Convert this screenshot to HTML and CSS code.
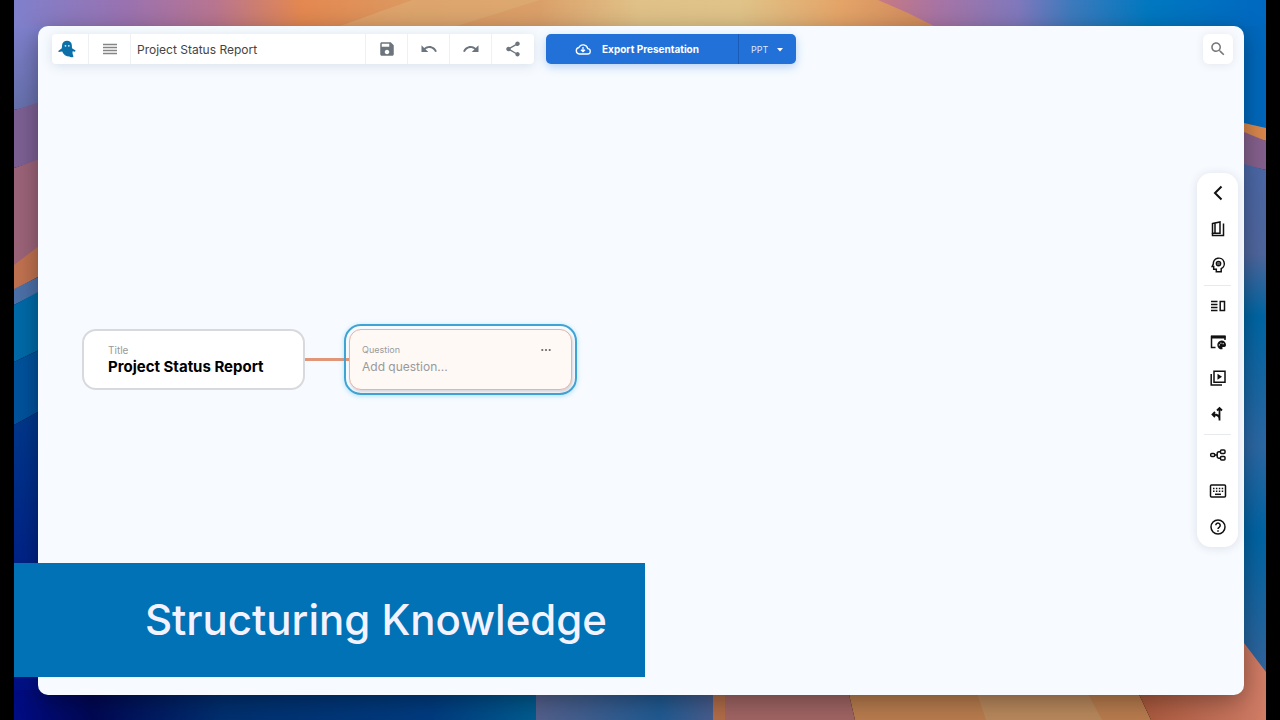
FILE: index.html
```html
<!DOCTYPE html>
<html lang="en">
<head>
    <meta charset="UTF-8">
    <meta name="viewport" content="width=device-width, initial-scale=1.0">
    <title>Project Status Report</title>
    <link rel="stylesheet" href="styles.css">
</head>
<body>
    <div class="desktop">
        <!-- Wallpaper -->
        <svg class="wallpaper" viewBox="14 0 1252 720" preserveAspectRatio="none" aria-hidden="true">
            <defs>
                <linearGradient id="top" gradientUnits="userSpaceOnUse" x1="14" y1="0" x2="1266" y2="0">
                    <stop offset="0" stop-color="#7f80cc"/>
                    <stop offset="0.09" stop-color="#9a72b0"/>
                    <stop offset="0.16" stop-color="#b87590"/>
                    <stop offset="0.23" stop-color="#e48850"/>
                    <stop offset="0.32" stop-color="#db9a62"/>
                    <stop offset="0.42" stop-color="#dba06a"/>
                    <stop offset="0.5" stop-color="#e0c288"/>
                    <stop offset="0.58" stop-color="#dfc388"/>
                    <stop offset="0.66" stop-color="#e4a468"/>
                    <stop offset="0.73" stop-color="#d08a5c"/>
                </linearGradient>
                <linearGradient id="topRight" gradientUnits="userSpaceOnUse" x1="878" y1="0" x2="1266" y2="0">
                    <stop offset="0" stop-color="#c87a80"/>
                    <stop offset="0.15" stop-color="#a874a4"/>
                    <stop offset="0.36" stop-color="#8078bc"/>
                    <stop offset="0.5" stop-color="#3c7abc"/>
                    <stop offset="0.7" stop-color="#0078c0"/>
                    <stop offset="1" stop-color="#0068c0"/>
                </linearGradient>
                <linearGradient id="bottom" gradientUnits="userSpaceOnUse" x1="14" y1="0" x2="536" y2="0">
                    <stop offset="0" stop-color="#000c84"/>
                    <stop offset="0.15" stop-color="#000854"/>
                    <stop offset="0.4" stop-color="#003070"/>
                    <stop offset="0.8" stop-color="#003c80"/>
                    <stop offset="1" stop-color="#005c90"/>
                </linearGradient>
                <linearGradient id="bottomMid" gradientUnits="userSpaceOnUse" x1="536" y1="0" x2="713" y2="0">
                    <stop offset="0" stop-color="#54608c"/>
                    <stop offset="0.7" stop-color="#205a92"/>
                    <stop offset="1" stop-color="#485c8c"/>
                </linearGradient>
                <linearGradient id="salmon" gradientUnits="userSpaceOnUse" x1="1139" y1="0" x2="1266" y2="0">
                    <stop offset="0" stop-color="#a8583c"/>
                    <stop offset="1" stop-color="#d07c66"/>
                </linearGradient>
                <linearGradient id="lavender" x1="0" y1="0" x2="0" y2="1">
                    <stop offset="0" stop-color="#7f80cc"/>
                    <stop offset="1" stop-color="#6670ac"/>
                </linearGradient>
                <linearGradient id="navy" x1="0" y1="0" x2="0" y2="1">
                    <stop offset="0" stop-color="#003a8c"/>
                    <stop offset="1" stop-color="#000c84"/>
                </linearGradient>
                <linearGradient id="east" x1="0" y1="0" x2="0" y2="1">
                    <stop offset="0" stop-color="#4a68a8"/>
                    <stop offset="0.18" stop-color="#50669e"/>
                    <stop offset="0.3" stop-color="#0066a4"/>
                    <stop offset="0.55" stop-color="#2c68a4"/>
                    <stop offset="0.72" stop-color="#0064a4"/>
                    <stop offset="1" stop-color="#34649c"/>
                </linearGradient>
            </defs>

            <rect x="14" y="0" width="1252" height="60" fill="url(#top)"/>
            <path d="M340 26L412 0H540L457 26z" fill="#e0b078" opacity="0.5"/>
            <path d="M878 0L908 13L934 26V60H1266V0z" fill="url(#topRight)"/>

            <path d="M14 26H60V100L14 110z" fill="url(#lavender)"/>
            <path d="M14 110L60 96V154L14 168z" fill="#7c6094"/>
            <path d="M14 168L60 152V240L14 268z" fill="#9c6478"/>
            <path d="M14 265L60 230V265L14 290z" fill="#c07250"/>
            <path d="M14 289L60 266V282L14 305z" fill="#4c70a8"/>
            <path d="M14 305L60 280V340L14 362z" fill="#006aa8"/>
            <path d="M14 362L60 340V400L14 425z" fill="#00529c"/>
            <path d="M14 425L60 400V720H14z" fill="url(#navy)"/>

            <path d="M1220 26H1266V130H1220z" fill="#0068bc"/>
            <path d="M1220 120L1244 123L1266 128V141L1220 128z" fill="#d8864c"/>
            <path d="M1220 126L1244 132L1266 141V170L1220 160z" fill="#84608c"/>
            <path d="M1220 160L1244 164L1266 170V680H1220z" fill="url(#east)"/>

            <rect x="14" y="690" width="522" height="30" fill="url(#bottom)"/>
            <rect x="536" y="690" width="177" height="30" fill="url(#bottomMid)"/>
            <path d="M713 690H848L855 720H713z" fill="#a06464"/>
            <rect x="713" y="690" width="12" height="30" fill="#b06c48"/>
            <path d="M848 690H1137L1151 720H855z" fill="#b87c4e"/>
            <path d="M976 690H1086L1102 720H986z" fill="#b8885c"/>
            <path d="M1220 622L1244 643L1266 672V720H1151L1137 690H1220z" fill="url(#salmon)"/>
        </svg>

        <main class="window">
            <header class="topbar">
                <div class="toolbar">
                    <button class="tool tool-logo" aria-label="Home">
                        <svg width="18" height="18" viewBox="0 0 18 18">
                            <path d="M9 .8c2.900 0 4.700 1.700 4.800 4.300l.2 3.100 3.600 2.400-.6 1.100-2.400-.4c0 1.400-.2 2.300.2 3.200.4 1 .6 1.500.6 2.300-1.300.7-2.900.7-4.100-.2C8.300 16.400 5.200 14.600 4.200 11.500L.6 12l-.3-1 3.500-2.800.3-3.200C4.300 2.400 6.200.8 9 .8z" fill="#0b6fa8"/>
                            <circle cx="7.500" cy="5.800" r=".9" fill="#d4f0ff"/>
                            <circle cx="10.800" cy="5.800" r=".9" fill="#d4f0ff"/>
                        </svg>
                    </button>
                    <button class="tool" aria-label="Menu">
                        <svg width="14" height="12" viewBox="0 0 14 12" stroke="#858585" stroke-width="1.300">
                            <path d="M0 1.500h14M0 4.500h14M0 7.500h14M0 10.500h14"/>
                        </svg>
                    </button>
                    <input class="doc-name" type="text" value="Project Status Report" aria-label="Document name">
                    <button class="tool" aria-label="Save">
                        <svg class="icon" viewBox="0 0 24 24"><path d="M17 3H5c-1.110 0-2 .9-2 2v14c0 1.100.89 2 2 2h14c1.100 0 2-.9 2-2V7l-4-4zm-5 16c-1.660 0-3-1.340-3-3s1.340-3 3-3 3 1.340 3 3-1.340 3-3 3zm3-10H5V5h10v4z"/></svg>
                    </button>
                    <button class="tool" aria-label="Undo">
                        <svg class="icon" viewBox="0 0 24 24"><path d="M12.500 8c-2.650 0-5.050.99-6.900 2.600L2 7v9h9l-3.620-3.620c1.390-1.160 3.160-1.880 5.120-1.880 3.540 0 6.550 2.310 7.600 5.500l2.370-.78C21.080 11.030 17.150 8 12.500 8z"/></svg>
                    </button>
                    <button class="tool" aria-label="Redo">
                        <svg class="icon" viewBox="0 0 24 24"><path d="M18.400 10.600C16.550 8.990 14.150 8 11.500 8c-4.650 0-8.580 3.030-9.960 7.220L3.900 16c1.050-3.190 4.050-5.500 7.600-5.500 1.950 0 3.730.72 5.120 1.880L13 16h9V7l-3.600 3.600z"/></svg>
                    </button>
                    <button class="tool" aria-label="Share">
                        <svg class="icon" viewBox="0 0 24 24"><path d="M18 16.080c-.76 0-1.440.3-1.960.77L8.910 12.700c.05-.23.09-.46.09-.7s-.04-.47-.09-.7l7.050-4.110c.54.5 1.250.81 2.040.81 1.660 0 3-1.340 3-3s-1.340-3-3-3-3 1.340-3 3c0 .24.04.47.09.7L8.040 9.810C7.500 9.310 6.790 9 6 9c-1.660 0-3 1.340-3 3s1.340 3 3 3c.79 0 1.500-.31 2.040-.81l7.120 4.160c-.05.21-.08.43-.08.65 0 1.610 1.310 2.920 2.920 2.920s2.920-1.310 2.920-2.920-1.310-2.920-2.920-2.920z"/></svg>
                    </button>
                </div>

                <div class="export">
                    <button class="export-btn">
                        <svg width="16" height="12" viewBox="0 0 16 12" fill="none" stroke="#fff" stroke-width="1.300">
                            <path d="M4.200 11h8.200a2.700 2.700 0 0 0 .3-5.400A4.700 4.700 0 0 0 3.900 4.500 3.300 3.300 0 0 0 4.200 11z"/>
                            <path d="M8 4v4.500M6 6.700l2 2 2-2"/>
                        </svg>
                        Export Presentation
                    </button>
                    <div class="format">
                        <select class="format-select" aria-label="Export format">
                            <option>PPT</option>
                            <option>PDF</option>
                        </select>
                        <svg class="format-caret" width="6" height="4" viewBox="0 0 6 4"><path d="M0 0h6L3 3.500z" fill="#fff"/></svg>
                    </div>
                </div>

                <button class="search-btn" aria-label="Search">
                    <svg class="icon" viewBox="0 0 24 24"><path d="M15.500 14h-.79l-.28-.27C15.410 12.590 16 11.110 16 9.500 16 5.910 13.090 3 9.500 3S3 5.910 3 9.500 5.910 16 9.500 16c1.610 0 3.090-.59 4.230-1.570l.27.28v.79l5 4.990L20.490 19l-4.990-5zm-6 0C7.010 14 5 11.990 5 9.500S7.010 5 9.500 5 14 7.010 14 9.500 11.990 14 9.500 14z"/></svg>
                </button>
            </header>

            <!-- Map nodes -->
            <section class="node node-title">
                <span class="node-label">Title</span>
                <h1 class="node-heading">Project Status Report</h1>
            </section>
            <div class="link-line"></div>
            <section class="node node-question">
                <div class="question-card">
                    <div class="question-head">
                        <label for="question">Question</label>
                        <button class="more-btn" aria-label="More options">
                            <svg width="10" height="4" viewBox="0 0 10 4" fill="#666"><circle cx="1.300" cy="2" r="1.100"/><circle cx="5" cy="2" r="1.100"/><circle cx="8.700" cy="2" r="1.100"/></svg>
                        </button>
                    </div>
                    <input class="question-input" id="question" type="text" placeholder="Add question...">
                </div>
            </section>

            <!-- Side rail -->
            <nav class="rail">
                <button aria-label="Collapse"><svg viewBox="0 0 18 18"><path d="M12.500 2.500L6 9l6.500 6.500" stroke-width="2"/></svg></button>
                <button aria-label="Templates"><svg viewBox="0 0 18 18"><path d="M3.500 3.500L11 2v11.200H3.500zM6 3.200v10"/><path d="M3.500 13v2.500h11V3.500"/></svg></button>
                <button aria-label="Insights"><svg viewBox="0 0 18 18"><path d="M12.200 15.800v-3.200A5.500 5.500 0 1 0 4.300 8l-1.100 2.400h1.500v2.900h2.600v2.500z"/><circle cx="9.500" cy="7.600" r="2.100"/><circle cx="9.500" cy="7.600" r=".4"/></svg></button>
                <hr>
                <button aria-label="Layout"><svg viewBox="0 0 18 18"><path d="M2 4.500h6.500M2 7.500h6.500M2 10.500h6.500M2 13.500h6.500M11.200 4.500h4.300v9h-4.300z"/></svg></button>
                <button aria-label="Theme"><svg viewBox="0 0 18 18"><path d="M6.500 14.500h-4v-11h13.500V7" /><path d="M2 4h14.500" stroke-width="3"/><path class="solid" d="M12.500 7.600a4.300 4.300 0 1 0 .3 8.700c.9 0 .9-.7.6-1.300-.2-.6.100-1 .8-1h1.100c1 0 1.700-.7 1.700-1.900 0-2.600-2-4.500-4.500-4.500z"/><path d="M10.300 11.900h.1M11.900 10.200h.1M14.100 10.700h.1" stroke="#fff" stroke-width="1.200" stroke-linecap="round"/></svg></button>
                <button aria-label="Slides"><svg viewBox="0 0 18 18"><path d="M5 2.200h11v11H5zM2.200 5v11H13"/><path class="solid" d="M8.500 4.700v6l4.500-3z"/></svg></button>
                <button aria-label="Branch"><svg viewBox="0 0 18 18"><path d="M10.500 15.500v-12M8 5.500L10.500 3 13 5.500M10.500 14c0-3-2-4.500-6-4.500M6 7L3.500 9.500 6 12" stroke-width="1.800"/></svg></button>
                <hr>
                <button aria-label="Mind map"><svg viewBox="0 0 18 18"><rect x="1.700" y="7.500" width="4" height="3" rx="1"/><rect x="11.500" y="4" width="4.500" height="3.500" rx="1"/><rect x="11.500" y="10.500" width="4.500" height="3.500" rx="1"/><path d="M5.700 9h2.500M11.500 5.700H10A1.800 1.800 0 0 0 8.200 7.500v3A1.800 1.800 0 0 0 10 12.300h1.500"/></svg></button>
                <button aria-label="Keyboard shortcuts"><svg viewBox="0 0 18 18"><rect x="1.500" y="3" width="15" height="12" rx="1"/><path d="M4 6.500h10.500M4 9.300h10.500" stroke-dasharray="1.500 1.400"/><path d="M6 12.300h6"/></svg></button>
                <button aria-label="Help"><svg viewBox="0 0 18 18"><circle cx="9" cy="9" r="7"/><path d="M6.800 7.300a2.200 2.200 0 1 1 3.500 1.800C9.400 9.700 9 10 9 11M9 12.200v1.500"/></svg></button>
            </nav>
        </main>

        <div class="caption">Structuring Knowledge</div>
    </div>
</body>
</html>
```

FILE: styles.css
```css
* {
    box-sizing: border-box;
}

body {
    margin: 0;
    background: #000;
    font-family: Inter, "Liberation Sans", sans-serif;
    color: #111;
}

button,
input,
select {
    font-family: inherit;
    border: none;
    margin: 0;
    padding: 0;
    background: none;
}

button {
    display: flex;
    align-items: center;
    justify-content: center;
    cursor: pointer;
}

.desktop {
    position: relative;
    display: flex;
    height: 100vh;
    margin: 0 14px;
    padding: 26px 22px 25px 24px;
    overflow: hidden;
}

.wallpaper {
    position: absolute;
    inset: 0;
    width: 100%;
    height: 100%;
}

.window {
    position: relative;
    flex: 1;
    background: #f7fbff;
    border-radius: 10px;
    box-shadow: 0 6px 24px rgba(0, 0, 0, 0.35);
}

/* Top bar */
.topbar {
    display: flex;
    align-items: center;
    padding: 8px 11px 0 14px;
}

.toolbar {
    display: flex;
    height: 30px;
    background: #fff;
    border-radius: 4px;
    box-shadow: 0 2px 12px rgba(60, 80, 130, 0.16);
}

.tool {
    width: 42px;
    border-right: 1px solid #eef0f4;
}

.tool:last-child {
    border-right: none;
}

.tool-logo {
    width: 37px;
    padding-right: 6px;
}

.icon {
    width: 18px;
    height: 18px;
    fill: #6c757d;
}

.doc-name {
    width: 235px;
    padding: 0 6px;
    border-right: 1px solid #eef0f4;
    font-size: 12px;
    color: #444;
}

.export {
    display: flex;
    height: 30px;
    margin-left: 12px;
    background: #2271d8;
    border-radius: 5px;
    box-shadow: 0 3px 10px rgba(34, 113, 216, 0.3);
}

.export-btn {
    gap: 11px;
    width: 193px;
    padding-right: 10px;
    border-right: 1px solid #1a5cb8;
    font-size: 10px;
    font-weight: 700;
    color: #fff;
}

.format {
    position: relative;
    width: 57px;
}

.format-select {
    width: 100%;
    height: 100%;
    padding-left: 12px;
    appearance: none;
    font-size: 9px;
    color: #dbe9ff;
}

.format-caret {
    position: absolute;
    top: 14px;
    right: 13px;
    pointer-events: none;
}

.search-btn {
    width: 30px;
    height: 30px;
    margin-left: auto;
    background: #fff;
    border-radius: 6px;
    box-shadow: 0 1px 8px rgba(60, 60, 100, 0.1);
}

.search-btn .icon {
    fill: #777;
}

/* Nodes on the canvas */
.node {
    position: absolute;
}

.node-title {
    left: 44px;
    top: 303px;
    width: 223px;
    padding: 12px 24px 11px;
    border: 2px solid #d8d9dd;
    border-radius: 14px;
    background: #fff;
}

.node-label {
    display: block;
    font-size: 10px;
    line-height: 14px;
    color: #999;
}

.node-heading {
    margin: 0;
    font-size: 15px;
    line-height: 20px;
    font-weight: 700;
    color: #000;
    white-space: nowrap;
}

.link-line {
    position: absolute;
    left: 267px;
    top: 332px;
    width: 45px;
    height: 3px;
    background: #e29678;
}

.node-question {
    left: 306px;
    top: 298px;
    width: 233px;
    padding: 3px;
    border: 2px solid #3fa4d4;
    border-radius: 17px;
    box-shadow: 0 1px 5px rgba(63, 180, 230, 0.4);
}

.question-card {
    padding: 12px 12px 14px;
    border: 1px solid #e4b4a4;
    border-radius: 12px;
    background: #fff9f6;
    box-shadow: 1px 2px 3px rgba(120, 90, 110, 0.25);
}

.question-head {
    display: flex;
    align-items: center;
    justify-content: space-between;
    font-size: 9px;
    line-height: 16px;
    color: #999;
}

.more-btn {
    width: 26px;
    height: 16px;
}

.question-input {
    display: block;
    width: 100%;
    height: 17px;
    font-size: 12px;
}

.question-input::placeholder {
    color: #999;
}

/* Side rail */
.rail {
    position: absolute;
    top: 50%;
    right: 6px;
    width: 41px;
    margin-top: -1px;
    padding: 2px 0;
    border-radius: 14px;
    background: #fff;
    box-shadow: 0 1px 10px rgba(60, 60, 100, 0.14);
    transform: translateY(-50%);
}

.rail button {
    width: 100%;
    height: 36px;
}

.rail svg {
    width: 18px;
    height: 18px;
    fill: none;
    stroke: #111;
    stroke-width: 1.5px;
}

.rail .solid {
    fill: #111;
    stroke: none;
}

.rail hr {
    height: 1px;
    margin: 2px 7px;
    border: none;
    background: #e8eaee;
}

/* Caption banner */
.caption {
    position: absolute;
    left: 0;
    bottom: 43px;
    width: 50.4%;
    padding: 29px 38px;
    background: #0072b5;
    font-size: 42px;
    line-height: 56px;
    font-weight: 500;
    color: #f4f2ff;
    text-align: right;
    white-space: nowrap;
}
```
